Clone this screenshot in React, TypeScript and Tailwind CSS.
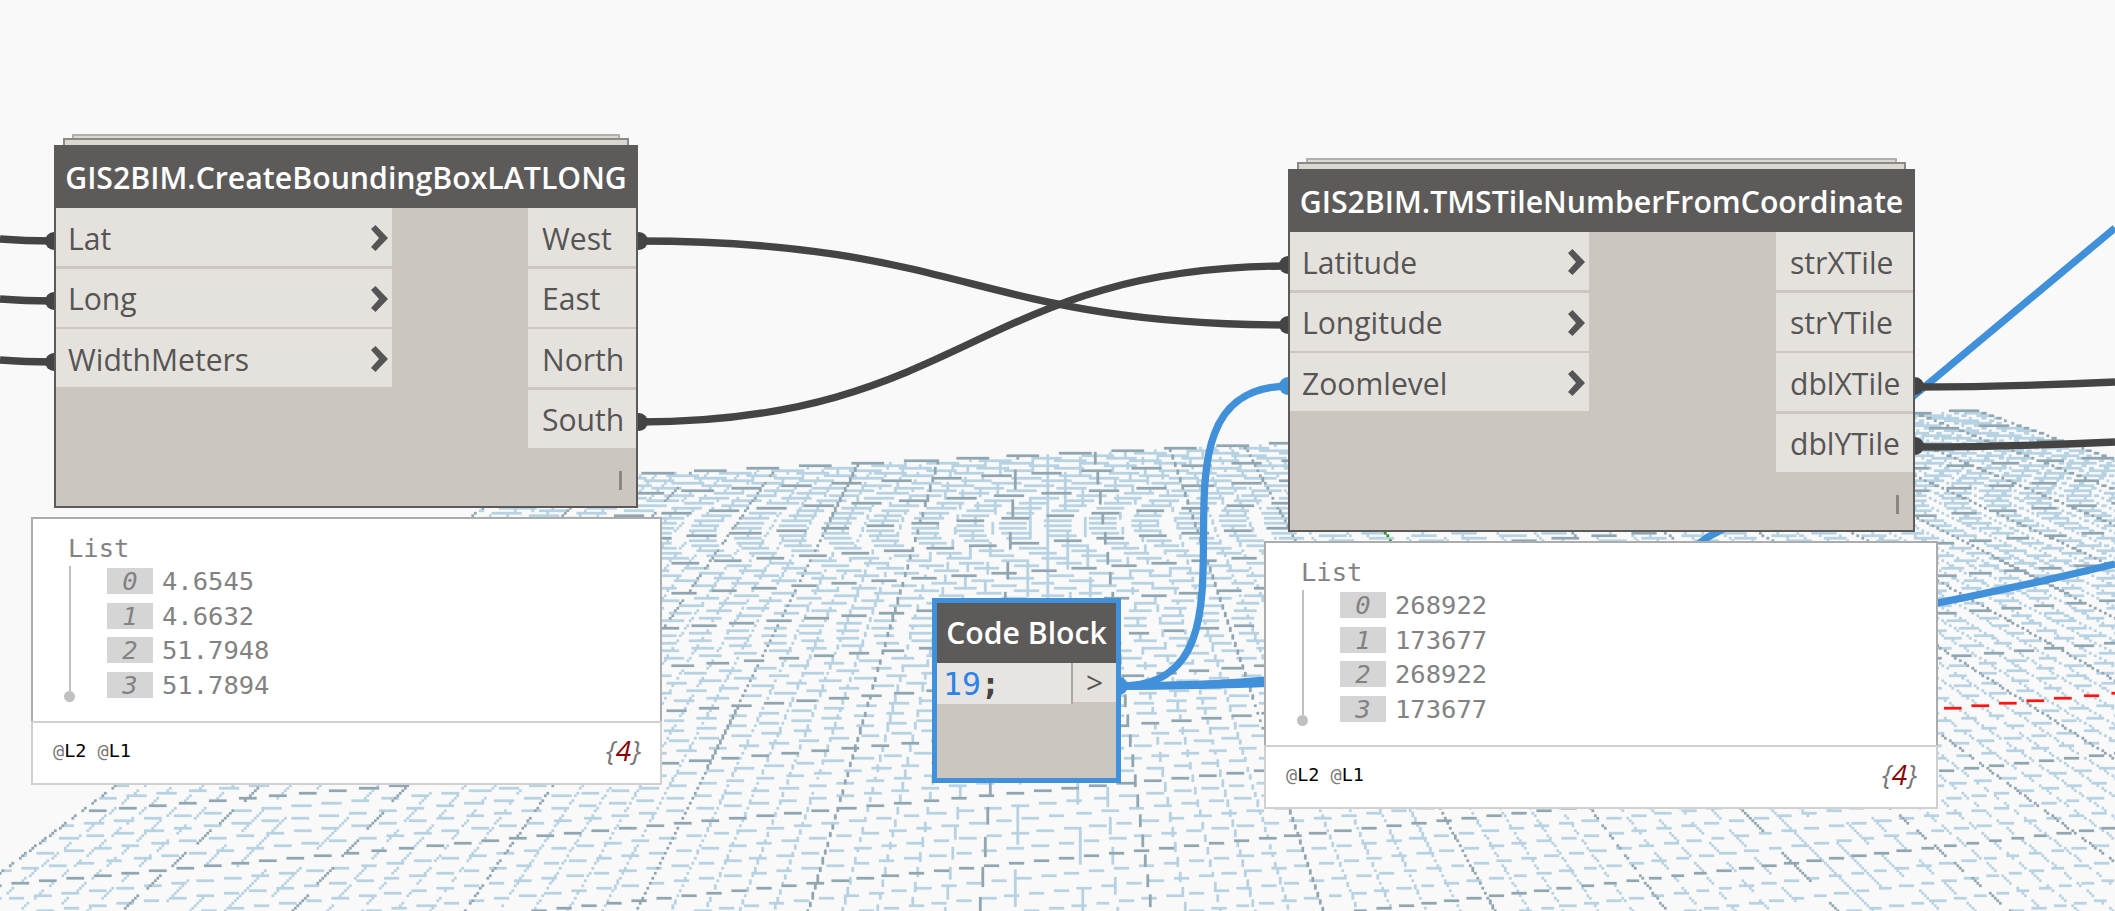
const P = 2.5;
const W = 2115;
const H = 911;
const OX = -0.95;
const OY = -0.55;
const HORIZON = 80;
const VA = 1047.95;
const VB = 8893;
const THICK = 0.62;

function buildGrid() {
  const cols = Math.ceil(W / P) + 1;
  const rows = Math.ceil(H / P) + 1;
  const buf = new Uint8Array(cols * rows);
  const uAt = (k: number) => 0.0009 + 0.2066 * (k - 6.4);
  const cAt = (n: number) => 11.047 + 0.9898 * n;
  const cross = (k: number, n: number): [number, number] => {
    const d = (VB - VA) / (uAt(k) + cAt(n));
    return [VA + uAt(k) * d, HORIZON + d];
  };
  const plot = (a: [number, number], b: [number, number], v: number) => {
    const [x0, y0, x1, y1] = [(a[0] - OX) / P, (a[1] - OY) / P, (b[0] - OX) / P, (b[1] - OY) / P];
    const dx = x1 - x0;
    const dy = y1 - y0;
    const steep = Math.abs(dy) > Math.abs(dx);
    const [s0, s1] = steep ? [Math.min(y0, y1), Math.max(y0, y1)] : [Math.min(x0, x1), Math.max(x0, x1)];
    const half = THICK / 2;
    const lim = steep ? rows : cols;
    for (let i = Math.max(0, Math.ceil(s0 - 0.5)); i < Math.min(lim, s1 - 0.5); i++) {
      const c = i + 0.5;
      const m = steep ? x0 + ((c - y0) * dx) / dy : y0 + ((c - x0) * dy) / dx;
      for (let j = Math.ceil(m - half - 0.5); j + 0.5 < m + half; j++) {
        const px = steep ? j : i;
        const py = steep ? i : j;
        if (px >= 0 && px < cols && py >= 0 && py < rows) buf[py * cols + px] = v;
      }
    }
  };
  const pass = (isMajor: boolean) => {
    for (let i = 0; i <= 100; i++) {
      if ((i % 5 === 0) !== isMajor) continue;
      const t = i / 5;
      const v = isMajor ? 2 : 1;
      plot(cross(t, 10), cross(t, -5), v);
      if (t - 10 >= -5) plot(cross(0, t - 10), cross(20, t - 10), v);
    }
  };
  pass(false);
  pass(true);
  plot(cross(10, 0), cross(20, 0), 3);
  plot(cross(10, 0), cross(10, 10), 4);
  const paths = ["", "", "", "", ""];
  for (let y = 0; y < rows; y++) {
    for (let x = 0; x < cols; ) {
      const v = buf[y * cols + x];
      let e = x + 1;
      while (e < cols && buf[y * cols + e] === v) e++;
      if (v) paths[v] += `M${x} ${y}h${e - x}v1h${x - e}z`;
      x = e;
    }
  }
  return paths;
}

const GRID = buildGrid();

function Grid() {
  return (
    <svg className="absolute inset-0" width={W} height={H} viewBox="0 0 2115 911">
      <g transform={`translate(${OX} ${OY}) scale(${P})`}>
        <path d={GRID[1]} fill="#b8d3e3" stroke="#b8d3e3" strokeWidth="0.1" />
        <path d={GRID[2]} fill="#90a6b2" stroke="#90a6b2" strokeWidth="0.1" />
        <path d={GRID[3]} fill="#ff1414" stroke="#ff1414" strokeWidth="0.1" />
        <path d={GRID[4]} fill="#2a9030" stroke="#2a9030" strokeWidth="0.1" />
      </g>
    </svg>
  );
}

function Wires() {
  return (
    <svg className="absolute inset-0" width={W} height={H} viewBox="0 0 2115 911" fill="none" strokeWidth="7.3">
      <g stroke="#4190da">
        <path d="M1120 686C1287 686 1119 386 1290 386" />
        <path d="M1120 686C1480 686 1560 650 1708 537C1780 500 1850 449 1925 386.500L2115 228" />
        <path d="M1120 686C1200 686 1230 683 1280 679" />
        <path d="M1120 686C1500 680 1800 640 2115 564" />
      </g>
      <g stroke="#444">
        <path d="M0 239Q24 241 54 241" />
        <path d="M0 299Q24 301 54 301" />
        <path d="M0 360Q24 362 54 362" />
        <path d="M638 241C966 241 975 325 1290 325" />
        <path d="M638 422C966 422 975 266 1290 266" />
        <path d="M1914 387Q2010 387 2115 382" />
        <path d="M1914 447Q2010 447 2115 442" />
      </g>
      <g fill="#444">
        {[241, 301, 362].map((y) => (
          <circle key={y} cx="54" cy={y} r="9" />
        ))}
        <circle cx="639" cy="241" r="9" />
        <circle cx="639" cy="422" r="9" />
        <circle cx="1288" cy="265" r="9" />
        <circle cx="1288" cy="325" r="9" />
        <circle cx="1915" cy="386" r="9" />
        <circle cx="1915" cy="446" r="9" />
      </g>
      <circle cx="1288" cy="386" r="9" fill="#4190da" />
      <circle cx="1119" cy="686" r="9" fill="#4190da" />
    </svg>
  );
}

function Chevron() {
  return (
    <svg className="mt-0.5" width="17" height="26" viewBox="0 0 17 26">
      <path d="M4.500 0 17 13 4.500 26 0 22 8 13 0 4Z" fill="#555" />
    </svg>
  );
}

interface NodeProps {
  title: string;
  inputs: string[];
  outputs: string[];
  place: string;
  inputWidth: string;
  outputWidth: string;
}

function GraphNode({ title, inputs, outputs, place, inputWidth, outputWidth }: NodeProps) {
  return (
    <div className={`absolute flex flex-col items-stretch ${place}`}>
      <div className="mx-[18px] h-1 border-2 border-b-0 border-[#b1b0ac] bg-[#dbd8d2]" />
      <div className="mx-[9px] h-[7px] border-2 border-b-0 border-[#8b8a87] bg-[#dbd8d2]" />
      <div className="flex h-[363px] flex-col border-2 border-t-0 border-[#5d5b59] bg-[#cbc6bf]">
        <div className="flex h-[63px] shrink-0 items-center justify-center bg-[#5d5b59] pt-1 text-[30.25px] font-semibold whitespace-nowrap text-white">
          {title}
        </div>
        <div className="flex justify-between">
          <div className={`flex flex-col gap-[2.5px] ${inputWidth}`}>
            {inputs.map((t) => (
              <div key={t} className="flex h-[58px] items-center justify-between bg-[#e5e2dd] pr-1 pl-3">
                <span className="pt-1">{t}</span>
                <Chevron />
              </div>
            ))}
          </div>
          <div className={`flex flex-col gap-[2.5px] ${outputWidth}`}>
            {outputs.map((t) => (
              <div key={t} className="flex h-[58px] items-center bg-[#e5e2dd] pt-1 pl-[14px] whitespace-nowrap">
                {t}
              </div>
            ))}
          </div>
        </div>
        <div className="flex flex-1 items-center justify-end pt-2 pr-[14px]">
          <div className="h-[19px] w-[3px] bg-[#8a8683]" />
        </div>
      </div>
    </div>
  );
}

function Preview({ values, place }: { values: string[]; place: string }) {
  return (
    <div className={`absolute flex h-[268px] flex-col bg-white ${place}`}>
      <div className="h-[204px] border-2 border-b-0 border-[#acacac] pt-[12px] pl-9 font-['DejaVu_Sans_Mono',monospace] text-[25.5px] leading-[34px] text-[#828282]">
        <div className="-ml-px">List</div>
        <div className="flex pt-px">
          <div className="flex h-[136px] w-3 flex-col items-center">
            <div className="-ml-[10px] w-[2.5px] flex-1 bg-[#c0c0c0]" />
            <div className="-ml-[11px] size-[11px] rounded-full bg-[#c0c0c0]" />
          </div>
          <div className="ml-[26px] flex flex-col gap-[8.6px] pt-[2px]">
            {values.map((v, i) => (
              <div key={i} className="flex h-[26px] items-center gap-[9px]">
                <span className="flex h-[26px] w-[46px] items-center justify-center bg-[#d5d5d5] italic">{i}</span>
                <span>{v}</span>
              </div>
            ))}
          </div>
        </div>
      </div>
      <div className="flex flex-1 items-center justify-between border-2 border-[#d0d0d0] pr-[19px] pb-1 pl-5">
        <div className="font-['DejaVu_Sans_Mono',monospace] text-[18.5px] text-[#777]">
          @<span className="text-black">L2</span> @<span className="text-black">L1</span>
        </div>
        <div className="pb-[3px] text-[28px] text-[#777] italic">
          {"{"}
          <span className="text-[#8b0000]">4</span>
          {"}"}
        </div>
      </div>
    </div>
  );
}

function CodeBlock() {
  return (
    <div className="absolute top-[598px] left-[932px] flex h-[185px] w-[189px] flex-col border-[5px] border-[#4190da] bg-[#cbc6bf]">
      <div className="flex h-[60px] shrink-0 items-center justify-center bg-[#5d5b59] text-[30.2px] font-semibold whitespace-nowrap text-white">
        Code Block
      </div>
      <div className="flex h-[41px] items-start">
        <div className="flex h-[41px] flex-1 items-center border-r-2 border-[#aaa6a2] bg-[#e8e4e1] pt-0.5 pl-1.5 font-['DejaVu_Sans_Mono',monospace] text-[31.5px] text-[#444]">
          <span className="text-[#2b82e8]">19</span>
          <span className="font-bold">;</span>
        </div>
        <div className="flex h-[39px] w-[43px] items-center justify-center bg-[#e5e2dd] pt-0.5">&gt;</div>
      </div>
    </div>
  );
}

export default function App() {
  return (
    <div className="relative h-[911px] w-[2115px] overflow-hidden bg-[#f9f9f9] font-['Open_Sans',sans-serif] text-[30.1px] leading-none text-[#555]">
      <Grid />
      <Wires />
      <GraphNode
        title="GIS2BIM.CreateBoundingBoxLATLONG"
        inputs={["Lat", "Long", "WidthMeters"]}
        outputs={["West", "East", "North", "South"]}
        place="left-[54px] top-[134px] w-[584px]"
        inputWidth="w-[336px]"
        outputWidth="w-[108px]"
      />
      <GraphNode
        title="GIS2BIM.TMSTileNumberFromCoordinate"
        inputs={["Latitude", "Longitude", "Zoomlevel"]}
        outputs={["strXTile", "strYTile", "dblXTile", "dblYTile"]}
        place="left-[1288px] top-[158px] w-[627px]"
        inputWidth="w-[299px]"
        outputWidth="w-[137px]"
      />
      <Preview values={["4.6545", "4.6632", "51.7948", "51.7894"]} place="left-[31px] top-[517px] w-[631px]" />
      <Preview values={["268922", "173677", "268922", "173677"]} place="left-[1264px] top-[541px] w-[674px]" />
      <CodeBlock />
    </div>
  );
}
